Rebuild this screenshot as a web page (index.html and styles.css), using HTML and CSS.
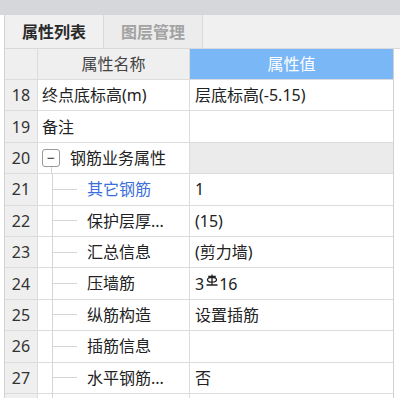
FILE: index.html
```html
<!DOCTYPE html>
<html lang="zh">
<head>
  <meta charset="UTF-8" />
  <title>属性列表</title>
  <link rel="stylesheet" href="styles.css">
</head>
<body>
  <div class="top-strip"></div>
  <div class="panel">
    <div class="tabs">
      <div class="tab active">属性列表</div>
      <div class="tab">图层管理</div>
    </div>
    <div class="grid">
      <div class="row head">
        <div class="num"></div>
        <div class="name">属性名称</div>
        <div class="value">属性值</div>
      </div>
      <div class="row">
        <div class="num">18</div>
        <div class="name">终点底标高(m)</div>
        <div class="value">层底标高(-5.15)</div>
      </div>
      <div class="row">
        <div class="num">19</div>
        <div class="name">备注</div>
        <div class="value"></div>
      </div>
      <div class="row group">
        <div class="num">20</div>
        <div class="name"><span class="toggle">−</span>钢筋业务属性</div>
        <div class="value"></div>
      </div>
      <div class="row">
        <div class="num">21</div>
        <div class="name child"><span class="branch"></span><span class="selected">其它钢筋</span></div>
        <div class="value">1</div>
      </div>
      <div class="row">
        <div class="num">22</div>
        <div class="name child"><span class="branch"></span>保护层厚...</div>
        <div class="value">(15)</div>
      </div>
      <div class="row">
        <div class="num">23</div>
        <div class="name child"><span class="branch"></span>汇总信息</div>
        <div class="value">(剪力墙)</div>
      </div>
      <div class="row">
        <div class="num">24</div>
        <div class="name child"><span class="branch"></span>压墙筋</div>
        <div class="value">3<svg class="rebar" width="12" height="13" viewBox="0 0 12 13"><path d="M6 0.5V10.5M2.2 2.5H9.8M1.5 5.8Q1.5 3.4 6 3.4Q10.5 3.4 10.5 5.8Q10.5 8.2 6 8.2Q1.5 8.2 1.5 5.8ZM0.5 11H11.5" fill="none" stroke="#222" stroke-width="1.3"/></svg>16</div>
      </div>
      <div class="row">
        <div class="num">25</div>
        <div class="name child"><span class="branch"></span>纵筋构造</div>
        <div class="value">设置插筋</div>
      </div>
      <div class="row">
        <div class="num">26</div>
        <div class="name child"><span class="branch"></span>插筋信息</div>
        <div class="value"></div>
      </div>
      <div class="row">
        <div class="num">27</div>
        <div class="name child"><span class="branch"></span>水平钢筋...</div>
        <div class="value">否</div>
      </div>
      <div class="row">
        <div class="num"></div>
        <div class="name child"><span class="branch"></span></div>
        <div class="value"></div>
      </div>
    </div>
  </div>
</body>
</html>
```

FILE: styles.css
```css
html, body {
  margin: 0;
  padding: 0;
  height: 100%;
  overflow: hidden;
  background-color: #ffffff;
  font-family: "Noto Sans", "Noto Sans CJK SC", sans-serif;
  font-size: 16px;
  color: #222222;
}

.top-strip {
  height: 15px;
  background-color: #d6d7db;
}

.panel {
  margin-left: 4px;
  width: 388px;
  border-left: 1px solid #d2d2d2;
  border-right: 1px solid #d2d2d2;
}

.tabs {
  display: flex;
  height: 33px;
  background-color: #f0f0f0;
  border-bottom: 1px solid #d9d9d9;
  margin-right: -7px;
}

.tab {
  width: 98px;
  line-height: 34px;
  text-align: center;
  font-weight: bold;
  color: #a3a3a3;
  border-right: 1px solid #d9d9d9;
  background-color: #ececec;
}
.tab.active {
  color: #2a2a2a;
  background-color: #f0f0f0;
}

.row {
  display: grid;
  grid-template-columns: 33px 152px 203px;
  height: 31.4px;
  box-sizing: border-box;
  border-bottom: 1px solid #dcdcdc;
}
.row.head { height: 31px; }

.row > div {
  box-sizing: border-box;
  border-right: 1px solid #dcdcdc;
  line-height: 30px;
  white-space: nowrap;
  overflow: hidden;
  display: flex;
  align-items: center;
}
.row > div:last-child { border-right: none; }

.num {
  background-color: #efefef;
  justify-content: center;
  color: #333333;
}

.name { padding-left: 4px; }
.value { padding-left: 5px; }

.head .name {
  background-color: #efefef;
  justify-content: center;
  color: #444444;
  padding-left: 0;
}
.head .value {
  background-color: #7ab7f6;
  color: #ffffff;
  justify-content: center;
  padding-left: 0;
}

.group .value { background-color: #ebebeb; }

.toggle {
  position: relative;
  width: 16px;
  height: 16px;
  border: 1px solid #9a9a9a;
  border-radius: 3px;
  margin-right: 10px;
  font-size: 14px;
  line-height: 15px;
  text-align: center;
  color: #333;
  background: #fff;
}
.toggle::after {
  content: "";
  position: absolute;
  left: 8px;
  top: 17px;
  height: 8px;
  border-left: 1px solid #d6d6d6;
}

.child {
  padding-left: 14px;
  align-items: stretch !important;
}
.branch {
  width: 24px;
  margin-right: 10px;
  border-left: 1px solid #d6d6d6;
  background: linear-gradient(#d6d6d6, #d6d6d6) no-repeat left center / 100% 1px;
  margin-top: -1px;
  margin-bottom: -1px;
}

.selected { color: #3b6fdc; }

.rebar {
  margin: -6px 1px 0 2px;
}
```
